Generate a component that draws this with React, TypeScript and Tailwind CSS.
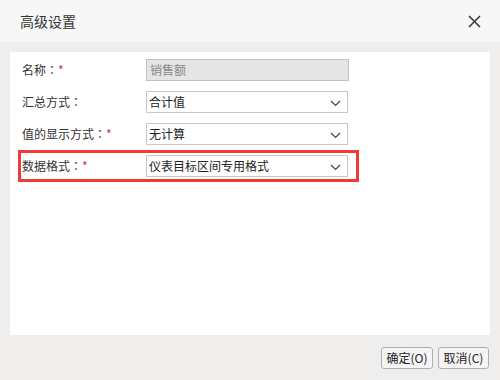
import React from "react";

const font = { fontFamily: '"Noto Sans CJK SC", "Noto Sans", sans-serif' };
const tc = { fontFamily: '"Noto Sans CJK TC", sans-serif' };

function Chevron() {
  return (
    <svg width="11" height="7" viewBox="0 0 11 7" className="absolute right-[6px] top-[8px]">
      <path d="M1 1 L5.5 5.5 L10 1" fill="none" stroke="#444" strokeWidth="1.2" />
    </svg>
  );
}

function Label({ text, req }: { text: string; req?: boolean }) {
  return (
    <div className="w-[124px] shrink-0 text-[12px] text-[#333] leading-[22px]">
      {text}
      <span style={tc}>：</span>
      {req && <span className="text-[#e52e2e]">*</span>}
    </div>
  );
}

function Select({ value }: { value: string }) {
  return (
    <div className="relative w-[202px] h-[22px] border border-[#c8c8c8] bg-white text-[12px] text-[#222] leading-[20px] pl-[2px]">
      {value}
      <Chevron />
    </div>
  );
}

export default function App() {
  return (
    <div style={font} className="w-[500px] h-[380px] bg-[#efeeec] flex flex-col">
      <div className="h-[42px] bg-[#f7f7f7] flex items-center justify-between pl-[20px] pr-[19px]">
        <span className="text-[14px] text-[#333]">高级设置</span>
        <svg width="13" height="13" viewBox="0 0 13 13">
          <path d="M1 1 L12 12 M12 1 L1 12" stroke="#333" strokeWidth="1.5" />
        </svg>
      </div>
      <div className="mx-[10px] mt-[10px] h-[283px] bg-white flex flex-col pt-[7px]">
        <div className="flex pl-[12px]">
          <Label text="名称" req />
          <div className="w-[203px] h-[22px] border border-[#c2c2c2] bg-[#e5e5e5] text-[12px] text-[#888] leading-[20px] pl-[3px]">
            销售额
          </div>
        </div>
        <div className="flex pl-[12px] mt-[10px]">
          <Label text="汇总方式" />
          <Select value="合计值" />
        </div>
        <div className="flex pl-[12px] mt-[10px]">
          <Label text="值的显示方式" req />
          <Select value="无计算" />
        </div>
        <div className="ml-[8px] mt-[5px] w-[341px] border-[3px] border-[#f03a3a] flex pl-[1px] py-[2px]">
          <Label text="数据格式" req />
          <Select value="仪表目标区间专用格式" />
        </div>
      </div>
      <div className="flex justify-end gap-[5px] pr-[11px] mt-[12px]">
        <button className="w-[52px] h-[22px] border border-[#a9b0bb] rounded-[3px] bg-[#f5f5f5] text-[12px] text-[#222] leading-[20px]">
          确定(O)
        </button>
        <button className="w-[51px] h-[22px] border border-[#a9b0bb] rounded-[3px] bg-[#f5f5f5] text-[12px] text-[#222] leading-[20px]">
          取消(C)
        </button>
      </div>
    </div>
  );
}
